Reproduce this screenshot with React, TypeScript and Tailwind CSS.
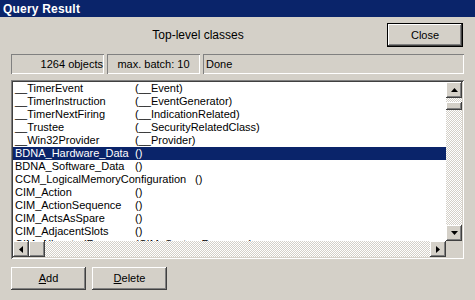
const raised =
  'bg-[#d4d0c8] shadow-[inset_-1px_-1px_#404040,inset_1px_1px_#ffffff,inset_-2px_-2px_#808080,inset_2px_2px_#d4d0c8]';
const checker =
  'bg-[repeating-conic-gradient(#d4d0c8_0%_25%,#ffffff_0%_50%)] bg-[length:2px_2px]';

const rows: { name: string; parent: string; w?: number; selected?: boolean }[] = [
  { name: '__TimerEvent', parent: '(__Event)' },
  { name: '__TimerInstruction', parent: '(__EventGenerator)' },
  { name: '__TimerNextFiring', parent: '(__IndicationRelated)' },
  { name: '__Trustee', parent: '(__SecurityRelatedClass)' },
  { name: '__Win32Provider', parent: '(__Provider)' },
  { name: 'BDNA_Hardware_Data', parent: '()', selected: true },
  { name: 'BDNA_Software_Data', parent: '()' },
  { name: 'CCM_LogicalMemoryConfiguration', parent: '()', w: 180 },
  { name: 'CIM_Action', parent: '()' },
  { name: 'CIM_ActionSequence', parent: '()' },
  { name: 'CIM_ActsAsSpare', parent: '()' },
  { name: 'CIM_AdjacentSlots', parent: '()' },
  { name: 'CIM_AllocatedResource', parent: '(CIM_SystemResource)' },
];

function Arrow({ dir }: { dir: 'up' | 'down' | 'left' | 'right' }) {
  const pts = {
    up: '0,4 7,4 3.5,0',
    down: '0,0 7,0 3.5,4',
    left: '4,0 4,7 0,3.5',
    right: '0,0 0,7 4,3.5',
  }[dir];
  const vertical = dir === 'up' || dir === 'down';
  return (
    <svg width={vertical ? 7 : 4} height={vertical ? 4 : 7} viewBox={vertical ? '0 0 7 4' : '0 0 4 7'}>
      <polygon points={pts} fill="#000" />
    </svg>
  );
}

function ScrollBtn({ dir }: { dir: 'up' | 'down' | 'left' | 'right' }) {
  return (
    <div className={`flex h-[16px] w-[16px] shrink-0 items-center justify-center ${raised}`}>
      <Arrow dir={dir} />
    </div>
  );
}

export default function App() {
  return (
    <div className="flex h-[300px] w-[475px] flex-col overflow-hidden bg-[#d4d0c8] font-['Liberation_Sans',Arial,sans-serif] text-[11px] text-black">
      {/* Title bar */}
      <div className="flex h-[17px] items-center bg-[#0a246a] pl-[3px] text-[12px] font-bold tracking-[0.2px] text-white">
        Query Result
      </div>

      <div className="flex flex-col pl-[11px] pr-[11px]">
        {/* Header */}
        <div className="mt-[6px] flex h-[24px] items-start">
          <div className="flex-1 pt-[3px] pr-[2px] text-center text-[12px]">Top-level classes</div>
          <button className="mr-[1px] flex h-[24px] w-[76px] items-center justify-center border border-black bg-[#d4d0c8] shadow-[inset_-1px_-1px_#404040,inset_1px_1px_#ffffff,inset_-2px_-2px_#808080] text-[11px]">
            Close
          </button>
        </div>

        {/* Status bar */}
        <div className="mt-[7px] flex h-[20px] gap-[3px]">
          <div className="flex w-[93px] items-center justify-end pr-[1px] shadow-[inset_1px_1px_#808080,inset_-1px_-1px_#ffffff]">
            1264 objects
          </div>
          <div className="flex w-[93px] items-center justify-center shadow-[inset_1px_1px_#808080,inset_-1px_-1px_#ffffff]">
            max. batch: 10
          </div>
          <div className="flex flex-1 items-center pl-[3px] shadow-[inset_1px_1px_#808080,inset_-1px_-1px_#ffffff]">
            Done
          </div>
        </div>

        {/* List */}
        <div className="mt-[6px] flex h-[179px] flex-col bg-white p-[2px] shadow-[inset_1px_1px_#808080,inset_-1px_-1px_#ffffff,inset_2px_2px_#404040,inset_-2px_-2px_#d4d0c8]">
          <div className="flex min-h-0 flex-1">
            <div className="min-w-0 flex-1 overflow-hidden">
              {rows.map((r) => (
                <div
                  key={r.name}
                  className={`flex h-[13px] items-center whitespace-nowrap pl-[2px] leading-[13px] ${
                    r.selected ? 'bg-[#0a246a] text-white' : ''
                  }`}
                >
                  <span className="shrink-0" style={{ width: (r.w ?? 120) + 'px' }}>
                    {r.name}
                  </span>
                  <span>{r.parent}</span>
                </div>
              ))}
            </div>
            <div className={`flex w-[16px] flex-col ${checker}`}>
              <ScrollBtn dir="up" />
              <div className="h-[4px]" />
              <div className={`h-[8px] w-[16px] ${raised}`} />
              <div className="flex-1" />
              <ScrollBtn dir="down" />
            </div>
          </div>
          <div className="flex h-[16px]">
            <div className={`flex flex-1 ${checker}`}>
              <ScrollBtn dir="left" />
              <div className={`h-[16px] w-[16px] ${raised}`} />
              <div className="flex-1" />
              <ScrollBtn dir="right" />
            </div>
            <div className="w-[16px] bg-[#d4d0c8]" />
          </div>
        </div>

        {/* Buttons */}
        <div className="mt-[8px] flex gap-[6px]">
          <button className={`flex h-[23px] w-[75px] items-center justify-center text-[11px] ${raised}`}>
            <span>
              <span className="underline">A</span>dd
            </span>
          </button>
          <button className={`flex h-[23px] w-[75px] items-center justify-center text-[11px] ${raised}`}>
            <span>
              <span className="underline">D</span>elete
            </span>
          </button>
        </div>
      </div>
    </div>
  );
}
